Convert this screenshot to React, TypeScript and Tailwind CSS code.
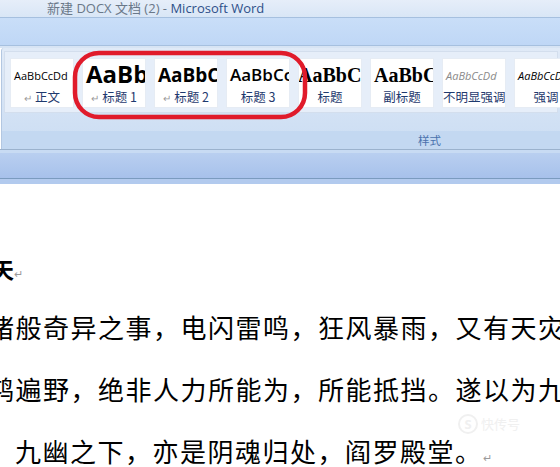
const styles = [
  { sample: "AaBbCcDd", cls: "text-[11px] pt-[9px]", label: "正文", mark: true },
  { sample: "AaBb", cls: "text-[24px] font-bold leading-[28px] pt-[1px]", label: "标题 1", mark: true },
  { sample: "AaBbC", cls: "text-[19px] font-bold leading-[26px] pt-[3px]", label: "标题 2", mark: true },
  { sample: "AaBbCc", cls: "text-[17px] font-semibold leading-[26px] pt-[3px]", label: "标题 3", mark: false },
  { sample: "AaBbC", cls: "text-[20px] font-bold leading-[26px] pt-[3px] font-['Liberation_Serif',serif] -ml-[4px]", label: "标题", mark: false },
  { sample: "AaBbC", cls: "text-[20px] font-bold leading-[26px] pt-[3px] font-['Liberation_Serif',serif]", label: "副标题", mark: false },
  { sample: "AaBbCcDd", cls: "text-[11px] italic text-[#8a8a8a] pt-[9px]", label: "不明显强调", mark: false },
  { sample: "AaBbCcDd", cls: "text-[11px] italic pt-[9px]", label: "强调", mark: false },
];

function Ret() {
  return <span className="text-[10px] text-[#9a9a9a] mr-[3px]">↵</span>;
}

export default function App() {
  return (
    <div className="relative w-[560px] h-[467px] overflow-hidden bg-white font-['Open_Sans','Noto_Sans_CJK_SC',sans-serif]">
      {/* title bar */}
      <div className="h-[17px] bg-gradient-to-b from-[#e6eef9] to-[#d9e6f6] pl-[47px] text-[13px] leading-[16px] whitespace-nowrap">
        <span className="text-[#6a7889]">新建 DOCX 文档 (2) - </span>
        <span className="text-[#2d5089]">Microsoft Word</span>
      </div>
      {/* tab band */}
      <div className="h-[29px] border-y border-[#a6c0df] bg-gradient-to-b from-[#c9def8] to-[#bfd7f6]" />
      <div className="h-[2px] bg-[#d7e4f4]" />
      {/* ribbon group */}
      <div className="h-[101px] bg-gradient-to-b from-[#e0eaf7] to-[#cbddf3] border-l border-[#b3c7e1] ml-[1px] rounded-tl-[3px] flex flex-col">
        <div className="mx-[2px] mt-[3px] h-[62px] border border-[#d3deed] bg-[#e6eef9] flex gap-[8px] pl-[5px] pt-[6px]">
          {styles.map((s) => (
            <div key={s.label} className="w-[64px] h-[50px] shrink-0 bg-white border border-[#e6ecf4] overflow-hidden flex flex-col">
              <div className={`h-[29px] whitespace-nowrap pl-[3px] ${s.cls}`}>{s.sample}</div>
              <div className="text-center text-[12.5px] leading-[17px] text-[#1f3a6e] whitespace-nowrap font-['Noto_Sans_CJK_SC',sans-serif]">
                {s.mark && <Ret />}
                {s.label}
              </div>
            </div>
          ))}
        </div>
        <div className="flex-1" />
        <div className="h-[18px] bg-[#c3d8f1] text-[11.5px] leading-[18px] text-[#4a72ad] pl-[416px] font-['Noto_Sans_CJK_SC',sans-serif]">
          样式
        </div>
      </div>
      <div className="h-[1px] bg-[#9bb2cd]" />
      <div className="h-[3px] bg-[#c8dbf3]" />
      <div className="h-[26px] bg-gradient-to-b from-[#b9cff0] to-[#a7c1eb] border-b border-[#7b9bbf]" />
      <div className="h-[5px] bg-[#b2caee]" />
      {/* document */}
      <div className="pt-[56px] text-black font-['Noto_Sans_CJK_SC',sans-serif] whitespace-nowrap">
        <div className="h-[56px] leading-[56px] -ml-[8px] text-[22px] font-bold">
          天<span className="text-[11px] font-normal text-[#9a9a9a]">↵</span>
        </div>
        <div className="h-[62px] leading-[62px] -ml-[12px] text-[26px] tracking-[1.5px]">
          诸般奇异之事，电闪雷鸣，狂风暴雨，又有天灾
        </div>
        <div className="h-[62px] leading-[62px] -ml-[12px] text-[26px] tracking-[1.5px]">
          鸿遍野，绝非人力所能为，所能抵挡。遂以为九
        </div>
        <div className="h-[62px] leading-[62px] ml-[15px] text-[26px] tracking-[1.5px]">
          <span className="underline decoration-wavy decoration-[#38b24a] decoration-1 underline-offset-[6px]">九幽之下</span>
          ，亦是阴魂归处，阎罗殿堂。
          <span className="text-[11px] tracking-normal text-[#9a9a9a]">↵</span>
        </div>
      </div>
      {/* faint watermark */}
      <div className="absolute left-[458px] top-[414px] flex items-center gap-[3px] text-[#f0f0f0] text-[13px]">
        <span className="w-[20px] h-[20px] rounded-full border-2 border-[#f0f0f0] text-center leading-[16px] font-bold">S</span>
        <span className="font-['Noto_Sans_CJK_SC',sans-serif]">快传号</span>
      </div>
      {/* red annotation */}
      <svg className="absolute left-0 top-0" width="560" height="467">
        <rect x="75" y="53" width="230" height="64" rx="24" ry="24" fill="none" stroke="#e01b2b" strokeWidth="4.5" />
      </svg>
    </div>
  );
}
